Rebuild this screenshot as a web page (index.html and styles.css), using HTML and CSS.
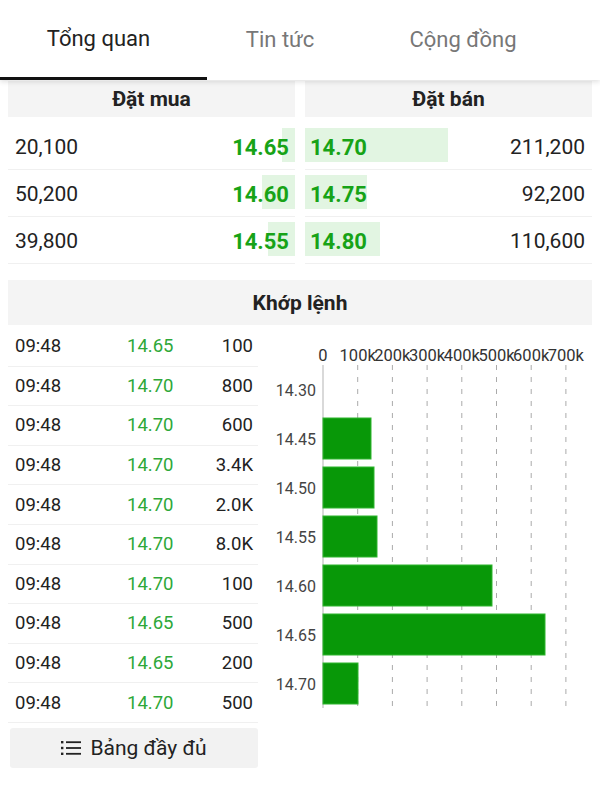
FILE: index.html
```html
<!DOCTYPE html>
<html>
<head>
    <title>Tổng quan</title>
    <link rel="stylesheet" href="styles.css">
</head>
<body>
    <nav class="tabs">
        <div class="tab tab-active">Tổng quan</div>
        <div class="tab tab-news">Tin tức</div>
        <div class="tab tab-community">Cộng đồng</div>
    </nav>

    <!-- Order book -->
    <div class="orderbook">
        <div class="side">
            <div class="side-head">Đặt mua</div>
            <div class="book-row buy">
                <span class="depth" style="width: 13px"></span>
                <span class="qty">20,100</span>
                <span class="price">14.65</span>
            </div>
            <div class="book-row buy">
                <span class="depth" style="width: 33px"></span>
                <span class="qty">50,200</span>
                <span class="price">14.60</span>
            </div>
            <div class="book-row buy">
                <span class="depth" style="width: 27px"></span>
                <span class="qty">39,800</span>
                <span class="price">14.55</span>
            </div>
        </div>
        <div class="side">
            <div class="side-head">Đặt bán</div>
            <div class="book-row sell">
                <span class="depth" style="width: 143px"></span>
                <span class="price">14.70</span>
                <span class="qty">211,200</span>
            </div>
            <div class="book-row sell">
                <span class="depth" style="width: 62px"></span>
                <span class="price">14.75</span>
                <span class="qty">92,200</span>
            </div>
            <div class="book-row sell">
                <span class="depth" style="width: 75px"></span>
                <span class="price">14.80</span>
                <span class="qty">110,600</span>
            </div>
        </div>
    </div>

    <div class="section-head">Khớp lệnh</div>

    <div class="matched">
        <div class="trades">
            <div class="trade"><span>09:48</span><span class="t-price">14.65</span><span class="t-vol">100</span></div>
            <div class="trade"><span>09:48</span><span class="t-price">14.70</span><span class="t-vol">800</span></div>
            <div class="trade"><span>09:48</span><span class="t-price">14.70</span><span class="t-vol">600</span></div>
            <div class="trade"><span>09:48</span><span class="t-price">14.70</span><span class="t-vol">3.4K</span></div>
            <div class="trade"><span>09:48</span><span class="t-price">14.70</span><span class="t-vol">2.0K</span></div>
            <div class="trade"><span>09:48</span><span class="t-price">14.70</span><span class="t-vol">8.0K</span></div>
            <div class="trade"><span>09:48</span><span class="t-price">14.70</span><span class="t-vol">100</span></div>
            <div class="trade"><span>09:48</span><span class="t-price">14.65</span><span class="t-vol">500</span></div>
            <div class="trade"><span>09:48</span><span class="t-price">14.65</span><span class="t-vol">200</span></div>
            <div class="trade"><span>09:48</span><span class="t-price">14.70</span><span class="t-vol">500</span></div>

            <button class="full-btn">
                <svg width="20" height="16" viewBox="0 0 20 16">
                    <rect x="0" y="1" width="2.4" height="2.4" fill="#222"/>
                    <rect x="0" y="6.8" width="2.4" height="2.4" fill="#222"/>
                    <rect x="0" y="12.6" width="2.4" height="2.4" fill="#222"/>
                    <rect x="5" y="1.3" width="15" height="1.8" fill="#222"/>
                    <rect x="5" y="7.1" width="15" height="1.8" fill="#222"/>
                    <rect x="5" y="12.9" width="15" height="1.8" fill="#222"/>
                </svg>
                Bảng đầy đủ
            </button>
        </div>

        <!-- Volume by price -->
        <svg class="chart" width="338" height="400" viewBox="0 0 338 400">
            <g class="x-labels">
                <text x="61" y="36">0</text>
                <text x="95.7" y="36">100k</text>
                <text x="130.4" y="36">200k</text>
                <text x="165.1" y="36">300k</text>
                <text x="199.8" y="36">400k</text>
                <text x="234.5" y="36">500k</text>
                <text x="269.2" y="36">600k</text>
                <text x="303.9" y="36">700k</text>
            </g>
            <g class="grid">
                <line x1="95.7" y1="40" x2="95.7" y2="383"/>
                <line x1="130.4" y1="40" x2="130.4" y2="383"/>
                <line x1="165.1" y1="40" x2="165.1" y2="383"/>
                <line x1="199.8" y1="40" x2="199.8" y2="383"/>
                <line x1="234.5" y1="40" x2="234.5" y2="383"/>
                <line x1="269.2" y1="40" x2="269.2" y2="383"/>
                <line x1="303.9" y1="40" x2="303.9" y2="383"/>
            </g>
            <line class="axis" x1="61" y1="40" x2="61" y2="383"/>
            <g class="y-labels">
                <text x="54" y="71">14.30</text>
                <text x="54" y="120">14.45</text>
                <text x="54" y="169">14.50</text>
                <text x="54" y="218">14.55</text>
                <text x="54" y="267">14.60</text>
                <text x="54" y="316">14.65</text>
                <text x="54" y="365">14.70</text>
            </g>
            <g class="bars">
                <rect x="61" y="93" width="48" height="41"/>
                <rect x="61" y="142" width="51" height="41"/>
                <rect x="61" y="191" width="54" height="41"/>
                <rect x="61" y="240" width="169" height="41"/>
                <rect x="61" y="289" width="222" height="41"/>
                <rect x="61" y="338" width="35" height="41"/>
            </g>
        </svg>
    </div>
</body>
</html>
```

FILE: styles.css
```css
body {
    font-family: Roboto, "Noto Sans", sans-serif;
    margin: 0;
    padding: 0;
    background-color: #fff;
    color: #222;
    width: 600px;
}

.tabs {
    display: flex;
    height: 80px;
    background-color: #fff;
    box-shadow: 0 2px 5px rgba(0, 0, 0, 0.12);
    position: relative;
    z-index: 1;
}

.tab {
    display: flex;
    align-items: center;
    justify-content: center;
    font-size: 22px;
    color: #777;
    box-sizing: border-box;
    padding-bottom: 2px;
}

.tab-active {
    width: 207px;
    color: #222;
    border-bottom: 3px solid #111;
    padding: 0 10px 0 0;
}

.tab-news {
    width: 146px;
}

.tab-community {
    width: 220px;
}

/* order book */
.orderbook {
    display: grid;
    grid-template-columns: 1fr 1fr;
    gap: 10px;
    padding: 1px 8px 0;
}

.side-head {
    height: 36px;
    display: flex;
    align-items: center;
    justify-content: center;
    background-color: #f4f4f4;
    font-weight: bold;
    font-size: 21px;
    margin-bottom: 6px;
}

.book-row {
    position: relative;
    display: flex;
    justify-content: space-between;
    align-items: center;
    height: 44px;
    border-bottom: 1px solid #f0f0f0;
    font-size: 21px;
    padding-top: 2px;
}

.depth {
    position: absolute;
    top: 5px;
    height: 34px;
    background-color: #e2f5e2;
}

.buy .depth {
    right: 0;
}

.sell .depth {
    left: 0;
}

.book-row .qty,
.book-row .price {
    position: relative;
}

.book-row .price {
    color: #17a317;
    font-weight: bold;
    font-size: 22px;
}

.buy .qty {
    padding-left: 7px;
}

.buy .price {
    padding-right: 6px;
}

.sell .price {
    padding-left: 5px;
}

.sell .qty {
    padding-right: 7px;
}

.section-head {
    margin: 16px 8px 0;
    height: 45px;
    display: flex;
    align-items: center;
    justify-content: center;
    background-color: #f4f4f4;
    font-weight: bold;
    font-size: 21px;
}

/* matched trades */
.matched {
    display: flex;
    padding: 2px 0 0 8px;
}

.trades {
    width: 250px;
}

.trade {
    display: grid;
    grid-template-columns: 119px 1fr 1fr;
    align-items: center;
    height: 38.6px;
    border-bottom: 1px solid #f0f0f0;
    font-size: 18.5px;
    color: #222;
}

.trade span:first-child {
    padding-left: 7px;
}

.t-price {
    color: #2ea838;
}

.t-vol {
    text-align: right;
    padding-right: 5px;
}

.full-btn {
    margin: 5px 0 0 2px;
    width: 248px;
    height: 40px;
    border: none;
    border-radius: 3px;
    background-color: #f2f2f2;
    font-family: Roboto, sans-serif;
    font-size: 21px;
    color: #222;
    display: flex;
    align-items: center;
    justify-content: center;
    gap: 9px;
    padding: 0;
}

.chart {
    margin: -2px 0 0 4px;
    display: block;
}

.chart text {
    font-family: Roboto, sans-serif;
    fill: #333;
}

.x-labels text {
    font-size: 16.5px;
    text-anchor: middle;
}

.y-labels text {
    font-size: 16px;
    text-anchor: end;
    fill: #444;
}

.grid line {
    stroke: #aaa;
    stroke-width: 1;
    stroke-dasharray: 5 7;
}

.axis {
    stroke: #ccc;
    stroke-width: 1.5;
}

.bars rect {
    fill: #089808;
    stroke: #2fb52f;
    stroke-width: 1;
}
```
